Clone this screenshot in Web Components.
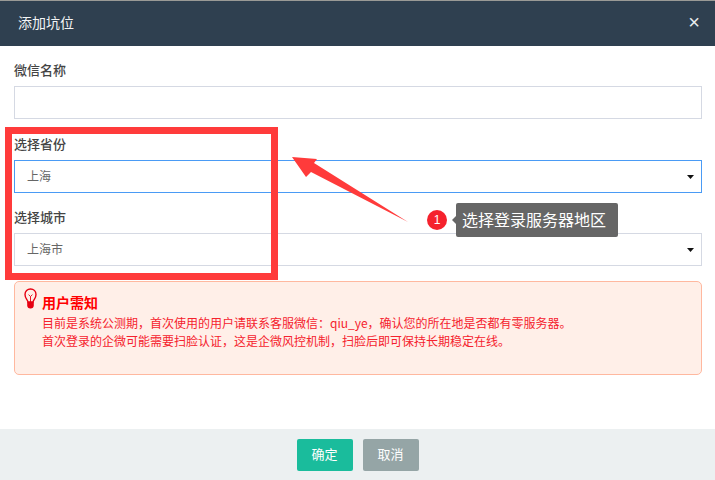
<!DOCTYPE html>
<html lang="zh">
<head>
<meta charset="utf-8">
<title>添加坑位</title>
<style>
html, body { margin: 0; height: 480px; overflow: hidden; background: #fff; }
body { font-family: "Noto Sans CJK SC", "Liberation Sans", sans-serif; position: relative; }
</style>
</head>
<body>
<add-dialog title-text="添加坑位">
    <form-field label="微信名称" style="margin-bottom:15px"></form-field>
    <form-field label="选择省份" value="上海" select focused style="margin-bottom:14px"></form-field>
    <form-field label="选择城市" value="上海市" select style="margin-bottom:15px"></form-field>
    <notice-box heading="用户需知">
        <div>目前是系统公测期，首次使用的用户请联系客服微信：qiu_ye，确认您的所在地是否都有零服务器。</div>
        <div>首次登录的企微可能需要扫脸认证，这是企微风控机制，扫脸后即可保持长期稳定在线。</div>
    </notice-box>
</add-dialog>
<guide-marks></guide-marks>

<script>
const dialogTemplate = document.createElement('template')
dialogTemplate.innerHTML = `
<style>
:host { display: flex; flex-direction: column; height: 480px; }
.strip { height: 1px; background: #9a9a96; }
header {
    height: 45px;
    box-sizing: border-box;
    display: flex;
    align-items: center;
    justify-content: space-between;
    padding: 0 15px 3px 18px;
    background: #2f4050;
    color: #f2f4f5;
    font-size: 14px;
}
.close { font: 20px "Liberation Sans", sans-serif; color: #e8ecee; }
main { flex: 1; padding: 14px 13px 0 14px; background: #fff; }
footer {
    height: 51px;
    box-sizing: border-box;
    padding-top: 10px;
    display: flex;
    justify-content: center;
    gap: 10px;
    background: #ecf0f1;
}
button {
    width: 56px;
    height: 32px;
    border: 0;
    border-radius: 2px;
    padding: 0 0 3px;
    color: #fff;
    font: 13px "Noto Sans CJK SC", sans-serif;
}
.ok { background: #1abc9c; }
.cancel { background: #95a5a6; }
</style>
<div class="strip"></div>
<header><span id="title"></span><span class="close">×</span></header>
<main><slot></slot></main>
<footer>
    <button class="ok">确定</button>
    <button class="cancel">取消</button>
</footer>
`

class AddDialog extends HTMLElement {
    constructor() {
        super()
        this.attachShadow({mode: 'open'})
        this.shadowRoot.appendChild(dialogTemplate.content.cloneNode(true))
        this.shadowRoot.querySelector('#title').textContent = this.getAttribute('title-text')
    }
}
customElements.define('add-dialog', AddDialog)

const fieldTemplate = document.createElement('template')
fieldTemplate.innerHTML = `
<style>
:host { display: block; }
label {
    display: block;
    height: 20px;
    line-height: 19px;
    margin-bottom: 6px;
    font-size: 13px;
    font-weight: 500;
    color: #444;
}
.box {
    height: 33px;
    box-sizing: border-box;
    display: flex;
    align-items: center;
    justify-content: space-between;
    padding: 0 7px 0 12px;
    border: 1px solid #d5d9e3;
    background: #fff;
    font-size: 12px;
    color: #666;
}
.value { margin-bottom: 2px; }
:host([focused]) .box { border-color: #4a9bf5; }
.caret { display: none; width: 7px; height: 4px; }
:host([select]) .caret { display: block; }
</style>
<label></label>
<div class="box"><span class="value"></span><svg class="caret" viewBox="0 0 7 4"><polygon points="0,0 7,0 3.5,4" fill="#111"/></svg></div>
`

class FormField extends HTMLElement {
    constructor() {
        super()
        this.attachShadow({mode: 'open'})
        this.shadowRoot.appendChild(fieldTemplate.content.cloneNode(true))
        this.shadowRoot.querySelector('label').textContent = this.getAttribute('label')
        this.shadowRoot.querySelector('.value').textContent = this.getAttribute('value') || ''
    }
}
customElements.define('form-field', FormField)

const noticeTemplate = document.createElement('template')
noticeTemplate.innerHTML = `
<style>
:host {
    display: flex;
    gap: 5px;
    height: 94px;
    box-sizing: border-box;
    padding: 6px 10px 0 9px;
    border: 1px solid #ffb89f;
    border-radius: 5px;
    background: #ffefe8;
    color: #f5222d;
}
svg { flex: none; width: 13px; height: 22px; }
h4 { margin: 4px 0 0; height: 20px; line-height: 20px; font-size: 14px; font-weight: 700; color: #f00; }
.lines { margin-top: 2px; font-size: 12px; line-height: 18px; white-space: nowrap; }
</style>
<svg viewBox="0 0 13 22">
    <path d="M4 14C3.4 11.4 1 10.4 1 6.6 1 3.4 3.4 1 6.5 1S12 3.4 12 6.6c0 3.8-2.4 4.8-3 7.4z" fill="none" stroke="#e60012" stroke-width="1.4"/>
    <path d="M4.6 6.6l1.9 2 1.9-2M6.5 8.6V14" fill="none" stroke="#e60012" stroke-width=".9"/>
    <path d="M3.2 14h6.6v3.6A3.2 3.2 0 0 1 6.5 20.6a3.2 3.2 0 0 1-3.3-3z" fill="#e60012"/>
</svg>
<div>
    <h4></h4>
    <div class="lines"><slot></slot></div>
</div>
`

class NoticeBox extends HTMLElement {
    constructor() {
        super()
        this.attachShadow({mode: 'open'})
        this.shadowRoot.appendChild(noticeTemplate.content.cloneNode(true))
        this.shadowRoot.querySelector('h4').textContent = this.getAttribute('heading')
    }
}
customElements.define('notice-box', NoticeBox)

// annotations drawn over the dialog
const marksTemplate = document.createElement('template')
marksTemplate.innerHTML = `
<style>
:host { display: block; }
.frame {
    position: absolute;
    left: 5px;
    top: 127px;
    width: 273px;
    height: 153px;
    box-sizing: border-box;
    border: 7px solid #ff3b3b;
}
svg { position: absolute; left: 0; top: 0; }
.dot {
    position: absolute;
    left: 427px;
    top: 210px;
    width: 20px;
    height: 20px;
    border-radius: 50%;
    background: #f5222d;
    color: #fff;
    font: 12px/20px "Liberation Sans", sans-serif;
    text-align: center;
}
.tip {
    position: absolute;
    left: 456px;
    top: 203px;
    width: 162px;
    height: 34px;
    box-sizing: border-box;
    padding-left: 6px;
    border-radius: 2px;
    background: #666;
    color: #fff;
    font-size: 16px;
    line-height: 33px;
    white-space: nowrap;
}
.tip::before {
    content: '';
    position: absolute;
    left: -4px;
    top: 13px;
    border: 4px solid transparent;
    border-left: 0;
    border-right-color: #666;
}
</style>
<div class="frame"></div>
<svg width="715" height="480"><polygon points="292,157 317,159 314,163 408,222 311,172 306,177" fill="#ff3b3b"/></svg>
<span class="dot">1</span>
<div class="tip">选择登录服务器地区</div>
`

class GuideMarks extends HTMLElement {
    constructor() {
        super()
        this.attachShadow({mode: 'open'})
        this.shadowRoot.appendChild(marksTemplate.content.cloneNode(true))
    }
}
customElements.define('guide-marks', GuideMarks)
</script>
</body>
</html>
